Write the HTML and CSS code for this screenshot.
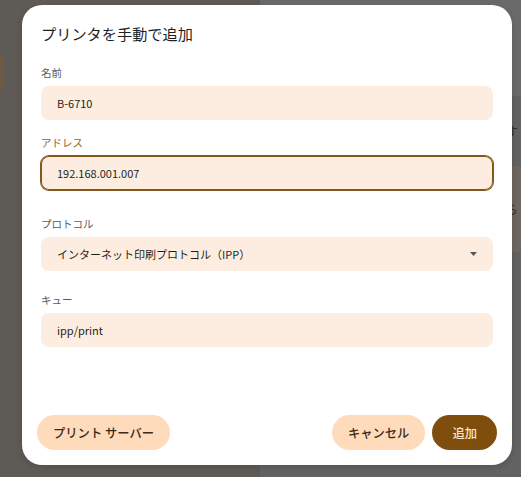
FILE: index.html
```html
<!DOCTYPE html>
<html lang="ja">
<head>
<meta charset="utf-8">
<title>プリンタを手動で追加</title>
<link rel="stylesheet" href="styles.css">
</head>
<body>
<div class="page">
  <div class="side">
    <div class="side-chip"></div>
  </div>
  <div class="main">
    <div class="main-top"></div>
    <p class="main-line line-one">プリンタを追加できます</p>
    <div class="main-block"><p class="main-line block-line">設定してから</p></div>
  </div>
</div>

<div class="dialog" role="dialog" aria-labelledby="dlg-title">
  <h1 class="dialog-title" id="dlg-title">プリンタを手動で追加</h1>

  <div class="field field-first">
    <label class="field-label">名前</label>
    <div class="input">B-6710</div>
  </div>

  <div class="field field-second">
    <label class="field-label focused">アドレス</label>
    <div class="input input-focused">192.168.001.007</div>
  </div>

  <div class="field field-third">
    <label class="field-label">プロトコル</label>
    <div class="input select">
      <span>インターネット印刷プロトコル（IPP）</span>
      <svg class="caret" width="7" height="4" viewBox="0 0 7 4"><path d="M0 0h7L3.5 4z" fill="#555"/></svg>
    </div>
  </div>

  <div class="field field-fourth">
    <label class="field-label">キュー</label>
    <div class="input">ipp/print</div>
  </div>

  <div class="footer">
    <button class="btn btn-tonal">プリント サーバー</button>
    <div class="footer-right">
      <button class="btn btn-tonal btn-cancel">キャンセル</button>
      <button class="btn btn-filled">追加</button>
    </div>
  </div>
</div>
</body>
</html>
```

FILE: styles.css
```css
* { box-sizing: border-box; }

html, body {
  margin: 0;
  padding: 0;
}

body {
  width: 521px;
  height: 477px;
  overflow: hidden;
  font-family: "Noto Sans CJK JP", "Noto Sans", sans-serif;
  position: relative;
  background: #5e5b57;
}

.page {
  display: grid;
  grid-template-columns: 260px 1fr;
  height: 477px;
}

.side {
  background: #5e5b57;
  padding-top: 55px;
}

.side-chip {
  width: 3px;
  height: 36px;
  background: #6e5a44;
}

.main {
  background: #626262;
}

.main-top {
  height: 96px;
  background: #6a6a6a;
}

.main-line {
  margin: 0;
  font-size: 13px;
  color: #2e2e2e;
  text-align: right;
  padding-right: 3px;
  line-height: 18px;
}

.line-one {
  margin-top: 26px;
}

.main-block {
  margin-top: 26px;
  height: 86px;
  background: #6e6660;
  padding-top: 34px;
}

.block-line {
  color: #333;
}

.dialog {
  position: absolute;
  left: 22px;
  top: 5px;
  width: 490px;
  height: 460px;
  background: #ffffff;
  border-radius: 20px;
  padding: 18px 19px 15px;
  display: flex;
  flex-direction: column;
  box-shadow: 0 2px 6px rgba(0,0,0,0.15);
}

.dialog-title {
  margin: 0;
  font-size: 15.2px;
  line-height: 20px;
  font-weight: 400;
  color: #1f1f1f;
}

.field {
  display: flex;
  flex-direction: column;
  gap: 5px;
}

.field-first { margin-top: 22px; }
.field-second { margin-top: 15px; }
.field-third { margin-top: 26px; }
.field-fourth { margin-top: 21px; }

.field-label {
  font-size: 10.5px;
  line-height: 16px;
  color: #5c5c5c;
}

.field-label.focused {
  color: #8a6530;
}

.input {
  height: 34px;
  border-radius: 8px;
  background: #fcede0;
  padding: 0 16px;
  display: flex;
  align-items: center;
  font-size: 11px;
  line-height: 16px;
  color: #1f1f1f;
}

.input-focused {
  box-shadow: 0 0 0 1px #85571a, inset 0 0 0 1px #85571a;
}

.select {
  justify-content: space-between;
}

.caret {
  display: block;
}

.footer {
  margin: auto -4px 0;
  display: flex;
  justify-content: space-between;
  align-items: center;
}

.footer-right {
  display: flex;
  gap: 7px;
}

.btn {
  height: 35px;
  border: none;
  border-radius: 18px;
  padding: 0 16px;
  font-family: "Noto Sans CJK JP", "Noto Sans", sans-serif;
  font-size: 12.3px;
  line-height: 16px;
  font-weight: 500;
  cursor: pointer;
}

.btn-tonal {
  background: #fedcbb;
  color: #3b2a19;
}

.btn-cancel {
  padding: 0 16px;
}

.btn-filled {
  background: #7f4e0c;
  color: #fde3c8;
  min-width: 64px;
  padding: 0 20px;
}
```
